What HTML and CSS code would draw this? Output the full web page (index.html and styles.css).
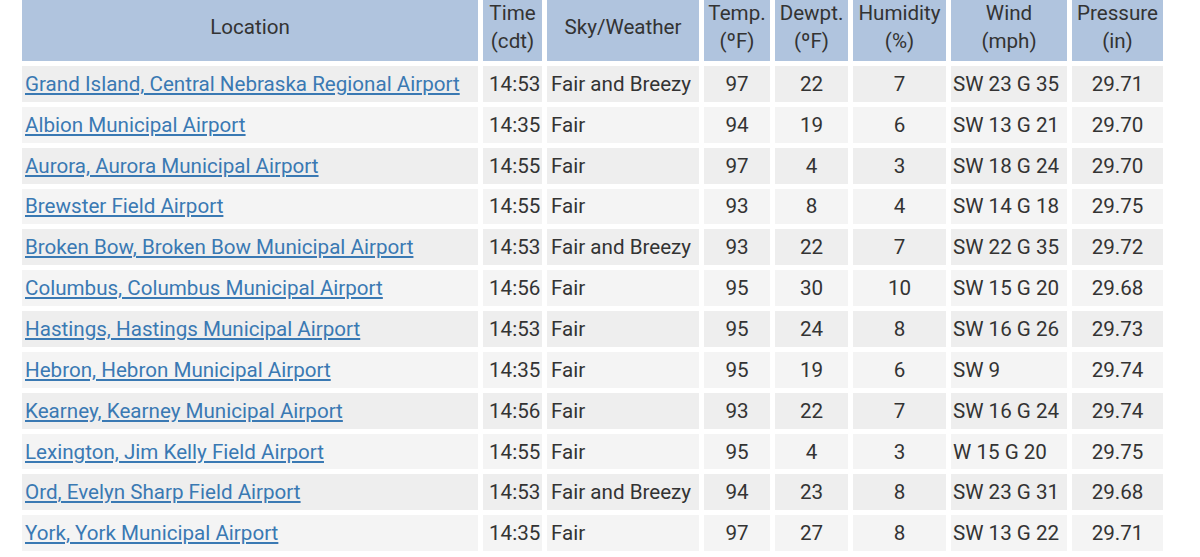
FILE: index.html
```html
<!DOCTYPE html>
<html lang="en">
<head>
<meta charset="utf-8">
<title>Current Conditions</title>
<link rel="stylesheet" href="styles.css">
</head>
<body>
<table class="obs">
  <colgroup>
    <col class="c-loc"><col class="c-time"><col class="c-sky"><col class="c-temp"><col class="c-dew"><col class="c-hum"><col class="c-wind"><col class="c-pres">
  </colgroup>
  <thead>
    <tr>
      <th>Location</th>
      <th>Time<br>(cdt)</th>
      <th>Sky/Weather</th>
      <th>Temp.<br>(ºF)</th>
      <th>Dewpt.<br>(ºF)</th>
      <th>Humidity<br>(%)</th>
      <th>Wind<br>(mph)</th>
      <th>Pressure<br>(in)</th>
    </tr>
  </thead>
  <tbody>
    <tr><td class="loc"><a href="#">Grand Island, Central Nebraska Regional Airport</a></td><td class="time">14:53</td><td>Fair and Breezy</td><td class="num">97</td><td class="num">22</td><td class="num">7</td><td class="wind">SW 23 G 35</td><td class="num">29.71</td></tr>
    <tr><td class="loc"><a href="#">Albion Municipal Airport</a></td><td class="time">14:35</td><td>Fair</td><td class="num">94</td><td class="num">19</td><td class="num">6</td><td class="wind">SW 13 G 21</td><td class="num">29.70</td></tr>
    <tr><td class="loc"><a href="#">Aurora, Aurora Municipal Airport</a></td><td class="time">14:55</td><td>Fair</td><td class="num">97</td><td class="num">4</td><td class="num">3</td><td class="wind">SW 18 G 24</td><td class="num">29.70</td></tr>
    <tr><td class="loc"><a href="#">Brewster Field Airport</a></td><td class="time">14:55</td><td>Fair</td><td class="num">93</td><td class="num">8</td><td class="num">4</td><td class="wind">SW 14 G 18</td><td class="num">29.75</td></tr>
    <tr><td class="loc"><a href="#">Broken Bow, Broken Bow Municipal Airport</a></td><td class="time">14:53</td><td>Fair and Breezy</td><td class="num">93</td><td class="num">22</td><td class="num">7</td><td class="wind">SW 22 G 35</td><td class="num">29.72</td></tr>
    <tr><td class="loc"><a href="#">Columbus, Columbus Municipal Airport</a></td><td class="time">14:56</td><td>Fair</td><td class="num">95</td><td class="num">30</td><td class="num">10</td><td class="wind">SW 15 G 20</td><td class="num">29.68</td></tr>
    <tr><td class="loc"><a href="#">Hastings, Hastings Municipal Airport</a></td><td class="time">14:53</td><td>Fair</td><td class="num">95</td><td class="num">24</td><td class="num">8</td><td class="wind">SW 16 G 26</td><td class="num">29.73</td></tr>
    <tr><td class="loc"><a href="#">Hebron, Hebron Municipal Airport</a></td><td class="time">14:35</td><td>Fair</td><td class="num">95</td><td class="num">19</td><td class="num">6</td><td class="wind">SW 9</td><td class="num">29.74</td></tr>
    <tr><td class="loc"><a href="#">Kearney, Kearney Municipal Airport</a></td><td class="time">14:56</td><td>Fair</td><td class="num">93</td><td class="num">22</td><td class="num">7</td><td class="wind">SW 16 G 24</td><td class="num">29.74</td></tr>
    <tr><td class="loc"><a href="#">Lexington, Jim Kelly Field Airport</a></td><td class="time">14:55</td><td>Fair</td><td class="num">95</td><td class="num">4</td><td class="num">3</td><td class="wind">W 15 G 20</td><td class="num">29.75</td></tr>
    <tr><td class="loc"><a href="#">Ord, Evelyn Sharp Field Airport</a></td><td class="time">14:53</td><td>Fair and Breezy</td><td class="num">94</td><td class="num">23</td><td class="num">8</td><td class="wind">SW 23 G 31</td><td class="num">29.68</td></tr>
    <tr><td class="loc"><a href="#">York, York Municipal Airport</a></td><td class="time">14:35</td><td>Fair</td><td class="num">97</td><td class="num">27</td><td class="num">8</td><td class="wind">SW 13 G 22</td><td class="num">29.71</td></tr>
  </tbody>
</table>
</body>
</html>
```
FILE: styles.css
```css
html, body {
  margin: 0;
  padding: 0;
  background: #ffffff;
  overflow: hidden;
}

body {
  font-family: Roboto, "Liberation Sans", Arial, sans-serif;
  font-size: 20.6px;
  color: #333333;
}

.obs {
  table-layout: fixed;
  border-collapse: separate;
  border-spacing: 5px;
  width: 1151px;
  margin: -12px 0 0 17px;
}

.c-loc { width: 456px; }
.c-time { width: 59px; }
.c-sky { width: 152px; }
.c-temp { width: 66px; }
.c-dew { width: 73px; }
.c-hum { width: 93px; }
.c-wind { width: 116px; }
.c-pres { width: 91px; }

.obs th {
  background: #b0c4de;
  font-weight: normal;
  line-height: 28px;
  padding: 6px 0;
  text-align: center;
  vertical-align: middle;
  white-space: nowrap;
}

.obs td {
  height: 35.85px;
  padding: 0 4px;
  line-height: 24px;
  vertical-align: middle;
  text-align: left;
  white-space: nowrap;
  overflow: hidden;
}

.obs td.loc {
  padding-left: 3px;
}

.obs td.time {
  padding: 0 0 0 6px;
}

.obs td.wind {
  padding-left: 2px;
}

.obs td.num {
  text-align: center;
}

.obs tbody tr:nth-child(odd) td {
  background: #eeeeee;
}

.obs tbody tr:nth-child(even) td {
  background: #f4f4f4;
}

.obs a {
  color: #3a79b3;
  text-decoration: underline;
}
```
